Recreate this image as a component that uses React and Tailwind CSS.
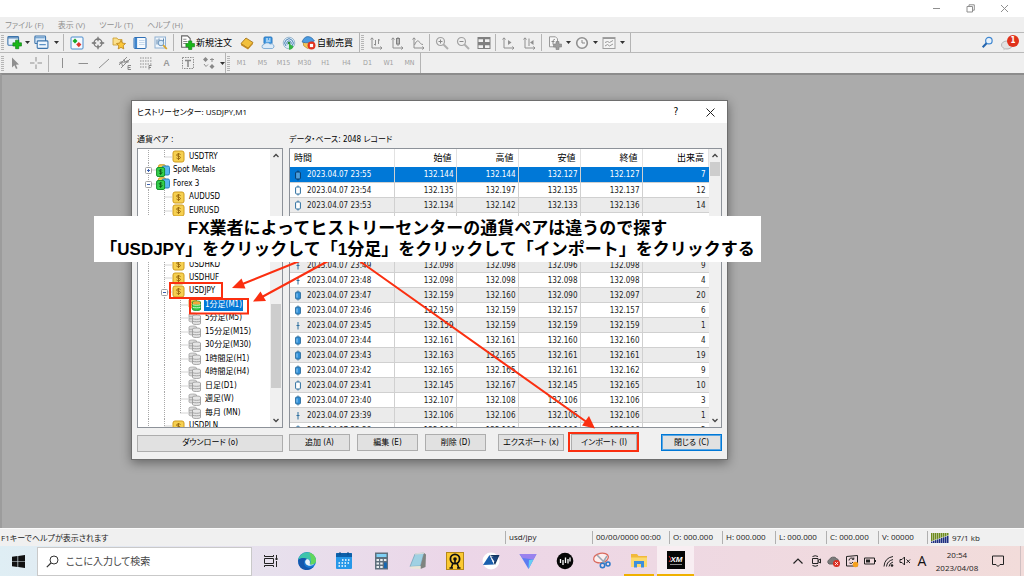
import React from "react";

const UI = "font-['DejaVu_Sans_Condensed','Noto_Sans_CJK_JP',sans-serif]";
const SEGOE = "font-['Open_Sans','Noto_Sans_CJK_JP',sans-serif]";

function Ico({ label, children, w = "w-[21px]", size = 14 }) {
  return (
    <button type="button" aria-label={label} className={`${w} h-full shrink-0 flex items-center justify-center`}>
      <svg width={size} height={size} viewBox="0 0 14 14" fill="none" aria-hidden="true">
        {children}
      </svg>
    </button>
  );
}

function Caret({ label }) {
  return (
    <button type="button" aria-label={label} className="w-1.5 h-full shrink-0 flex items-center justify-center">
      <svg width="5" height="3" viewBox="0 0 5 3" aria-hidden="true">
        <path d="M0 0h5L2.5 3z" fill="#333" />
      </svg>
    </button>
  );
}

const Sep = ({ m = "mx-px" }) => <span className={`${m} w-px h-[17px] shrink-0 bg-[#b4b4b4]`} />;

const Grip = () => (
  <span className="w-[3px] h-[15px] shrink-0 mx-px bg-[repeating-linear-gradient(#b5b5b5_0_1px,#efefef_1px_2px)]" />
);

const Plus = ({ x, y, c = "#18b818", s = "#0b7d12" }) => (
  <path
    d={`M${x + 2.5} ${y}h3v2.5h2.5v3h-2.5v2.5h-3v-2.5h-2.5v-3h2.5z`}
    fill={c}
    stroke={s}
    strokeWidth=".6"
  />
);

const G = "#8f8f8f";

function Axes() {
  return <path d="M3 2v10h10M1.5 3.5 3 1.8l1.5 1.7M11.3 10.5 13 12l-1.7 1.5" stroke={G} />;
}

function MainToolbar() {
  return (
    <div className="h-5 flex items-center border-b border-[#b9b9b9]">
      <div className="h-full flex items-center border-r border-[#b4b4b4]">
        <Grip />
        <Ico label="新規チャート" w="w-[19px]" size={15}>
          <rect x=".8" y="1.5" width="10" height="8" rx=".8" fill="#e6f1fb" stroke="#3c74ac" />
          <path d="M1 2.7h9.5" stroke="#3c74ac" />
          <Plus x={5.5} y={4.8} />
        </Ico>
        <Caret label="新規チャート一覧" />
        <Ico label="プロファイル" w="w-[23px]" size={15}>
          <rect x=".8" y="1" width="10" height="7" rx=".8" fill="#d7e8f8" stroke="#3c74ac" />
          <rect x="3" y="5.5" width="10" height="7" rx=".8" fill="#eef6fd" stroke="#3c74ac" />
          <path d="M5 9h6M1 2.5h9" stroke="#5c92c6" />
        </Ico>
        <Caret label="プロファイル一覧" />
        <Sep m="ml-1 mr-[2px]" />
        <Ico label="気配値表示">
          <rect x="1" y="1" width="12" height="12" rx="1" fill="#f4f9fe" stroke="#4a8ccc" />
          <path d="M5 2.5l2.5 2.5L5 7.5 2.5 5z" fill="#16a826" />
          <path d="M8.8 6l2.6 2.6-2.6 2.6-2.6-2.6z" fill="#e0342a" />
        </Ico>
        <Ico label="データウィンドウ">
          <circle cx="7" cy="7" r="4" stroke="#777" strokeWidth="1.3" />
          <path d="M7 .8v4.4M7 8.8v4.4M.8 7h4.4M8.8 7h4.4" stroke="#777" strokeWidth="1.3" />
        </Ico>
        <Ico label="ナビゲーター">
          <path d="M1 2h4l1 1.5h4V9H1z" fill="#fbe08c" stroke="#c99a2c" strokeWidth=".8" />
          <path d="M9 4.2l1.4 2.9 3.1.4-2.3 2.2.6 3.2L9 11.4l-2.8 1.5.6-3.2-2.3-2.2 3.1-.4z" fill="#fcc83a" stroke="#b7811c" strokeWidth=".8" />
        </Ico>
        <Ico label="ターミナル">
          <rect x="1" y="1.5" width="12" height="11" rx="1" fill="#f6fafe" stroke="#2f6fb5" />
          <path d="M1.5 2h2.6v10H1.5z" fill="#3f85cc" />
          <path d="M6 4.5h5.5M6 6.5h5.5M6 8.5h5.5" stroke="#b9cfe6" strokeWidth=".8" />
        </Ico>
        <Ico label="ストラテジーテスター">
          <rect x="1" y="1" width="10.5" height="11" fill="#f0f6fc" stroke="#8eb0d2" />
          <path d="M3 3.5v5M5 2.5v4M9.5 2.5v3" stroke="#5c85ad" />
          <circle cx="7" cy="7" r="2.8" fill="#d6eafa" stroke="#6d95bd" />
          <path d="M9.2 9.2l3.6 3.8" stroke="#dba52a" strokeWidth="1.8" />
        </Ico>
        <Sep m="mx-[2px]" />
        <button type="button" className="h-full flex items-center text-[9px] leading-3 text-black">
          <svg width="15" height="15" viewBox="0 0 14 14" className="ml-1 mr-px" fill="none" aria-hidden="true">
            <path d="M1.5.8h5.5l2.5 2.5v8.2h-8z" fill="#fff" stroke="#666" />
            <path d="M3 4h3M3 6h4M3 8h3" stroke="#888" />
            <Plus x={5.5} y={5.5} />
          </svg>
          新規注文
        </button>
        <span className="w-1" />
        <Ico label="メタエディター">
          <path d="M1 7.5L6 2l7 4.5-5 5.7z" fill="#f2c03c" stroke="#9a6a12" strokeWidth=".8" />
          <path d="M1 7.5v1.800L8 13.400l5-5.500V6.500l-5 5.600z" fill="#c58a1e" />
        </Ico>
        <Ico label="VPS">
          <rect x="3" y="1" width="8" height="7" rx="1" fill="#3f9be6" stroke="#2b77bd" />
          <path d="M5 3h2M8 3h1.5M5 5h4.5" stroke="#fff" />
          <path d="M3 12.5a2 2 0 010-4 3.5 3 0 016-.5 2.5 2.3 0 012.5 4.500z" fill="#dcebf8" stroke="#6c9fce" strokeWidth=".8" />
        </Ico>
        <Ico label="シグナル">
          <circle cx="7" cy="7" r="5.8" fill="#dceaf5" stroke="#9cb8cf" />
          <path d="M4 10a4.2 4.2 0 116 0M5.3 8.5a2.2 2.2 0 113.4 0" stroke="#4d86b8" />
          <circle cx="7" cy="7" r="1.3" fill="#2e8f3a" />
          <path d="M7 7.5v6.300c2.500 0 4-1.500 4.500-3.300z" fill="#35b443" />
        </Ico>
        <button type="button" className="h-full flex items-center text-[9px] leading-3 text-black">
          <svg width="15" height="15" viewBox="0 0 14 14" className="ml-0.5 mr-px" fill="none" aria-hidden="true">
            <path d="M2 6h9l-1 5-4 1.5L2.5 10z" fill="#f4c65b" stroke="#b98b23" strokeWidth=".7" />
            <path d="M1 6.5C2 4 3.5 1.5 6.5 1.5S11.5 4 12.5 5.5C9 7.5 5 7.8 1 6.5z" fill="#4c9be0" stroke="#2f6ca8" strokeWidth=".7" />
            <circle cx="9.8" cy="9.8" r="3.7" fill="#e2331f" />
            <rect x="8.3" y="8.3" width="3" height="3" fill="#fff" />
          </svg>
          自動売買
        </button>
        <span className="w-1.5" />
      </div>
      <div className="h-full flex items-center border-r border-[#b4b4b4]">
        <Grip />
        <Ico label="バーチャート">
          <Axes />
          <path d="M6.5 4v5.5M5 8.500h1.500M9.500 3v5M9.500 4H11" stroke={G} />
        </Ico>
        <Ico label="ローソク足">
          <Axes />
          <path d="M8 1v9" stroke={G} />
          <rect x="6.5" y="2.5" width="3" height="5.5" fill="#bbb" stroke="#808080" />
        </Ico>
        <Ico label="ラインチャート">
          <Axes />
          <path d="M3.5 9C5 5 7 4 8 5.5s2 3 4 3" stroke={G} />
        </Ico>
        <Sep />
        <Ico label="ズームイン">
          <circle cx="5.5" cy="5.5" r="4" stroke="#a2a2a2" strokeWidth="1.2" />
          <path d="M8.5 8.5l4.500 4.500" stroke="#b0b0b0" strokeWidth="2" />
          <path d="M3.5 5.5h4M5.5 3.5v4" stroke="#8a8a8a" />
        </Ico>
        <Ico label="ズームアウト">
          <circle cx="5.5" cy="5.5" r="4" stroke="#a2a2a2" strokeWidth="1.2" />
          <path d="M8.5 8.5l4.500 4.500" stroke="#b0b0b0" strokeWidth="2" />
          <path d="M3.5 5.5h4" stroke="#8a8a8a" />
        </Ico>
        <Ico label="チャートの整列">
          <g fill="#f2f2f2" stroke="#808080">
            <rect x="1" y="1.5" width="5.5" height="5" />
            <rect x="7.5" y="1.5" width="5.5" height="5" />
            <rect x="1" y="7.5" width="5.5" height="5" />
            <rect x="7.5" y="7.5" width="5.5" height="5" />
          </g>
          <path d="M1 2.5h12M1 8.5h12" stroke="#808080" strokeWidth="1.5" />
        </Ico>
        <Sep />
        <Ico label="自動スクロール">
          <Axes />
          <path d="M7 4v5l3.5-2.5z" fill={G} />
        </Ico>
        <Ico label="チャートシフト">
          <Axes />
          <path d="M7 2.5V10" stroke={G} />
          <path d="M11.5 4v5L8 6.500z" fill={G} />
        </Ico>
        <Sep m="mx-[2px]" />
        <Ico label="インディケーター">
          <path d="M1.5.8h6l2 2v8h-8z" fill="#f6f6f6" stroke="#999" />
          <path d="M5 8.5c0-6 1-5 2-5M3.500 5.500h3" stroke="#888" />
          <Plus x={5.5} y={5.5} c="#9d9d9d" s="#808080" />
        </Ico>
        <Caret label="インディケーター一覧" />
        <Ico label="時間足">
          <circle cx="7" cy="7" r="5.3" fill="#f4f4f4" stroke="#909090" strokeWidth="1.6" />
          <path d="M7 4v3h3" stroke="#888" />
        </Ico>
        <Caret label="時間足一覧" />
        <Ico label="定型チャート">
          <rect x="1" y="1.5" width="12" height="11" fill="#f4f4f4" stroke="#a0a0a0" />
          <path d="M1 2.500h12M3 6.500l2.500-1 2 1 3.500-2M3 10l2.500-1.500 2 1.500L11 8" stroke="#999" />
        </Ico>
        <Caret label="定型チャート一覧" />
        <span className="w-[5px]" />
      </div>
      <div className="ml-auto h-full flex items-center pr-1">
        <Ico label="検索" size={13}>
          <circle cx="8.5" cy="5" r="3.5" fill="#e9f3fc" stroke="#3f86d0" strokeWidth="1.3" />
          <path d="M6 7.8L1.800 12.200" stroke="#2565ae" strokeWidth="2.2" />
        </Ico>
        <button type="button" aria-label="お知らせ 1件" className="relative w-[22px] h-full flex items-center">
          <svg width="13" height="12" viewBox="0 0 13 12" className="mt-1 ml-[3px]" aria-hidden="true">
            <ellipse cx="6" cy="6" rx="5.5" ry="4" fill="#e2e2e2" stroke="#b5b5b5" />
            <path d="M2.5 9l0 2.500 3-2z" fill="#ccc" />
          </svg>
          <span className="absolute right-px top-[2px] size-3 rounded-full bg-[#e0311b] text-white text-[8px] leading-3 font-bold text-center">
            1
          </span>
        </button>
      </div>
    </div>
  );
}

const PERIODS = ["M1", "M5", "M15", "M30", "H1", "H4", "D1", "W1", "MN"];

function LineToolbar() {
  return (
    <div className="h-5 flex items-center">
      <div className="h-full flex items-center border-r border-[#b4b4b4]">
        <Grip />
        <Ico label="カーソル" w="w-5">
          <path d="M4 1.500v10l2.400-2.200 1.600 3.700 1.500-.7-1.600-3.500 3.100-.2z" fill="#8f8f8f" />
        </Ico>
        <Ico label="十字カーソル">
          <path d="M7 1v4.500M7 8.500V13M1 7h4.500M8.500 7H13" stroke={G} />
        </Ico>
        <Sep m="mx-[2px]" />
        <Ico label="垂直線">
          <path d="M7.5 2v10" stroke={G} />
        </Ico>
        <Ico label="水平線">
          <path d="M2.5 7.500h9.500" stroke={G} />
        </Ico>
        <Ico label="トレンドライン">
          <path d="M2 12L12 3" stroke={G} />
        </Ico>
        <Ico label="等間隔チャネル">
          <path d="M1 9L9 1M3 12l9-9M3 5l1.500 5M6 3l1.500 5M9 4l1 3M1 7l10-2" stroke={G} />
          <path d="M13 9.500h-3v4h3M10 11.500h2.500" stroke="#888" />
        </Ico>
        <Ico label="フィボナッチ">
          <path d="M1 2h12M1 5h12M1 8h12M1 11h7" stroke={G} strokeDasharray="1.5 1" />
          <path d="M12.500 9.500h-2.500v4M10 11.500h2" stroke="#888" />
        </Ico>
        <button type="button" className="w-[21px] h-full text-[9px] leading-none font-bold text-[#999] font-['Liberation_Sans',sans-serif]">A</button>
        <Ico label="テキストラベル">
          <rect x="1.5" y="1.5" width="11" height="11" stroke={G} strokeDasharray="1.5 1" />
          <path d="M4 4.500h6M7 4.500V11" stroke="#888" strokeWidth="1.5" />
        </Ico>
        <Ico label="矢印">
          <path d="M3.500 1l2.500 2.500L3.500 6 1 3.500zM10 8l2.500 2.500L10 13l-2.500-2.500z" fill="#888" />
          <path d="M2 8l2 2.500 2-2M8 3.500h4M10 2v4" stroke={G} />
        </Ico>
        <Caret label="矢印一覧" />
      </div>
      <div className="h-full flex items-center border-r border-[#b4b4b4] text-[7px] text-[#a0a0a0]">
        <Grip />
        {PERIODS.map((p) => (
          <button type="button" key={p} className="w-[21px] h-full text-center">
            {p}
          </button>
        ))}
      </div>
    </div>
  );
}

/* ---------- symbol tree ---------- */

function Guide({ kind }) {
  const paths = {
    pipe: "M8.5 0V14",
    tee: "M8.5 0V14M8.5 7H16",
    end: "M8.5 0V7M8.5 7H16",
    plus: "M8.5 0V14M8.5 7H16",
    minus: "M8.5 0V14M8.5 7H16",
  };
  const box = kind === "plus" || kind === "minus";
  return (
    <svg width="16" height="14" viewBox="0 0 16 14" className="shrink-0" fill="none" aria-hidden="true">
      <path d={paths[kind]} stroke="#a8a8a8" strokeDasharray="1 1" />
      {box && <rect x="5.5" y="4.5" width="6" height="6" rx="1" fill="#fff" stroke="#a0a0a0" />}
      {box && <path d={kind === "plus" ? "M7 7.5h3M8.5 6v3" : "M7 7.5h3"} stroke="#3a5fae" />}
    </svg>
  );
}

function NodeIcon({ type }) {
  const on = type === "dbOn";
  return (
    <svg width="14" height="13" viewBox="0 0 14 13" className="shrink-0" fill="none" aria-hidden="true">
      {type === "coin" && (
        <>
          <rect x="1" y="1" width="11" height="11" rx="2" fill="#f6d050" stroke="#cf9c1f" />
          <path d="M8.5 4.500c-1-1-4-.8-4 .6 0 1.600 4 .7 4 2.400 0 1.400-3 1.600-4 .5M6.500 3v7" stroke="#9c6c10" />
        </>
      )}
      {type === "group" && (
        <>
          <rect x="2.5" y=".8" width="7" height="8" rx="1.5" fill="#f7d35a" stroke="#c9971f" />
          <rect x="6" y="2" width="7.5" height="9" rx="1.5" fill="#59b6ee" stroke="#2b81bd" />
          <rect x=".6" y="3.5" width="8" height="9" rx="1.5" fill="#35cf4c" stroke="#13912a" />
          <path d="M6.2 6.300c-.8-.8-3-.6-3 .5 0 1.200 3 .6 3 1.900 0 1.100-2.300 1.200-3.100.4M4.600 5.200v5.800" stroke="#064f12" strokeWidth=".8" />
        </>
      )}
      {(type === "db" || on) && (
        <>
          <path d="M1 2c0-1.300 7.500-1.300 7.500 0v7c0 1.300-7.500 1.300-7.500 0z" fill={on ? "#f5c443" : "#dcdcdc"} stroke={on ? "#c58c1b" : "#a2a2a2"} strokeWidth=".8" />
          <path d="M1 4.300h4M1 6.800h4" stroke={on ? "#c58c1b" : "#a2a2a2"} strokeWidth=".8" />
          <path d="M4.500 4c0-1.300 8-1.300 8 0v7.500c0 1.300-8 1.300-8 0z" fill={on ? "#31c944" : "#e6e6e6"} stroke={on ? "#12872a" : "#939393"} strokeWidth=".8" />
          {on && <path d="M4.800 4c0-1.100 7.400-1.100 7.400 0v2.600H4.800z" fill="#f5a83a" />}
          <path d="M4.500 6.700c2 .8 6 .8 8 0M4.500 9.200c2 .8 6 .8 8 0" stroke={on ? "#e9ffe9" : "#939393"} strokeWidth=".8" />
        </>
      )}
    </svg>
  );
}

const TREE = [
  { g: ["pipe", "end"], i: "coin", t: "USDTRY" },
  { g: ["plus"], i: "group", t: "Spot Metals" },
  { g: ["minus"], i: "group", t: "Forex 3" },
  { g: ["pipe", "tee"], i: "coin", t: "AUDUSD" },
  { g: ["pipe", "tee"], i: "coin", t: "EURUSD" },
  { g: ["pipe", "tee"], i: "coin", t: "GBPUSD" },
  { g: ["pipe", "tee"], i: "coin", t: "USDCAD" },
  { g: ["pipe", "tee"], i: "coin", t: "USDCHF" },
  { g: ["pipe", "tee"], i: "coin", t: "USDHKD" },
  { g: ["pipe", "tee"], i: "coin", t: "USDHUF" },
  { g: ["pipe", "minus"], i: "coin", t: "USDJPY" },
  { g: ["pipe", "pipe", "tee"], i: "dbOn", t: "1分足(M1)", on: true },
  { g: ["pipe", "pipe", "tee"], i: "db", t: "5分足(M5)" },
  { g: ["pipe", "pipe", "tee"], i: "db", t: "15分足(M15)" },
  { g: ["pipe", "pipe", "tee"], i: "db", t: "30分足(M30)" },
  { g: ["pipe", "pipe", "tee"], i: "db", t: "1時間足(H1)" },
  { g: ["pipe", "pipe", "tee"], i: "db", t: "4時間足(H4)" },
  { g: ["pipe", "pipe", "tee"], i: "db", t: "日足(D1)" },
  { g: ["pipe", "pipe", "tee"], i: "db", t: "週足(W)" },
  { g: ["pipe", "pipe", "end"], i: "db", t: "毎月 (MN)" },
  { g: ["pipe", "tee"], i: "coin", t: "USDPLN" },
];

function ScrollBar({ thumb }) {
  return (
    <div className="w-3 shrink-0 bg-[#f0f0f0] flex flex-col items-center" aria-hidden="true">
      <svg width="12" height="13" viewBox="0 0 12 13" fill="none">
        <path d="M3.5 8L6 5.500 8.500 8" stroke="#444" strokeWidth="1.3" />
      </svg>
      <div className="flex-1 w-full px-px">
        <div className={`bg-[#cdcdcd] ${thumb}`} />
      </div>
      <svg width="12" height="13" viewBox="0 0 12 13" fill="none">
        <path d="M3.5 5L6 7.500 8.500 5" stroke="#444" strokeWidth="1.3" />
      </svg>
    </div>
  );
}

function SymbolTree() {
  return (
    <div className="h-[280px] flex overflow-hidden bg-white border border-[#8d9299]">
      <ul role="tree" aria-label="通貨ペア" className="flex-1 h-[284px] pt-px pl-[2px] grid auto-rows-fr text-[8px] leading-3 text-black">
        {TREE.map((n) => (
          <li key={n.t} role="treeitem" aria-selected={!!n.on} className="min-h-0 flex items-center whitespace-nowrap">
            {n.g.map((k, i) => (
              <Guide key={i} kind={k} />
            ))}
            <NodeIcon type={n.i} />
            <span className={n.on ? "ml-[2px] px-px bg-[#0078d7] text-white" : "ml-[3px]"}>{n.t}</span>
          </li>
        ))}
      </ul>
      <ScrollBar thumb="mt-[142px] h-[84px]" />
    </div>
  );
}

/* ---------- price table ---------- */

const ROWS = [
  ["23:55", "132.144", "132.144", "132.127", "132.127", "7", "sel"],
  ["23:54", "132.135", "132.197", "132.135", "132.137", "12", "up"],
  ["23:53", "132.134", "132.142", "132.133", "132.136", "14", "up"],
  ["23:52", "132.134", "132.134", "132.134", "132.134", "2", "tick"],
  ["23:51", "132.120", "132.135", "132.120", "132.134", "8", "up"],
  ["23:50", "132.098", "132.121", "132.098", "132.120", "11", "up"],
  ["23:49", "132.098", "132.098", "132.096", "132.098", "9", "tick"],
  ["23:48", "132.098", "132.098", "132.098", "132.098", "4", "tick"],
  ["23:47", "132.159", "132.160", "132.090", "132.097", "20", "down"],
  ["23:46", "132.159", "132.159", "132.157", "132.157", "6", "down"],
  ["23:45", "132.159", "132.159", "132.159", "132.159", "1", "tick"],
  ["23:44", "132.161", "132.161", "132.160", "132.160", "4", "down"],
  ["23:43", "132.163", "132.165", "132.161", "132.161", "19", "down"],
  ["23:42", "132.165", "132.165", "132.161", "132.162", "9", "down"],
  ["23:41", "132.145", "132.167", "132.145", "132.165", "10", "up"],
  ["23:40", "132.107", "132.108", "132.106", "132.106", "3", "down"],
  ["23:39", "132.106", "132.106", "132.106", "132.106", "1", "tick"],
  ["23:38", "132.106", "132.106", "132.106", "132.106", "2", "down"],
];

function Candle({ type }) {
  const c = type === "sel" ? "#063b6b" : "#2d6f9f";
  if (type === "tick") {
    return (
      <svg width="8" height="11" viewBox="0 0 8 11" className="shrink-0" fill="none" aria-hidden="true">
        <path d="M4 2v7.500M2.500 5.500h3" stroke={c} />
      </svg>
    );
  }
  return (
    <svg width="8" height="11" viewBox="0 0 8 11" className="shrink-0" fill="none" aria-hidden="true">
      <path d="M4 .5v10" stroke={c} />
      <rect x="1.6" y="2" width="4.8" height="7" rx="1" fill={type === "down" ? "#2f8fd8" : type === "sel" ? "#4f9fdd" : "#fff"} stroke={c} />
      {type === "down" && <path d="M3 3.500v4" stroke="#9bd0f5" />}
    </svg>
  );
}

const HEAD = ["始値", "高値", "安値", "終値", "出来高"];

function PriceTable() {
  return (
    <div className="h-[280px] flex overflow-hidden bg-white border border-[#8d9299]">
      <div className="flex-1 overflow-hidden">
        <table className="w-full table-fixed border-collapse text-[8px] leading-3 text-[#222]">
          <colgroup>
            <col className="w-[104px]" />
            <col className="w-[62px]" />
            <col className="w-[62px]" />
            <col className="w-[62px]" />
            <col className="w-[62px]" />
            <col />
          </colgroup>
          <thead>
            <tr className="h-[18px] text-[9px] text-black">
              <th className="p-0 pl-1 text-left font-normal border-r border-[#e2e2e2]">時間</th>
              {HEAD.map((h) => (
                <th key={h} className="p-0 pr-1 text-right font-normal border-r border-[#e2e2e2]">
                  {h}
                </th>
              ))}
            </tr>
          </thead>
          <tbody>
            {ROWS.map((r, i) => (
              <tr
                key={r[0]}
                className={`h-[15px] ${i === 0 ? "bg-[#0078d7] text-white" : i % 2 ? "bg-white" : "bg-[#ebebeb]"}`}
              >
                <td className="p-0 pt-[2px] border-r border-b border-[#d0d0d0]">
                  <span className="flex items-center pl-1 gap-[5px]">
                    <Candle type={r[6]} />
                    2023.04.07 {r[0]}
                  </span>
                </td>
                {r.slice(1, 6).map((v, j) => (
                  <td key={j} className={`p-0 pt-[2px] text-right border-b border-[#d0d0d0] ${j < 4 ? "pr-[2px] border-r" : "pr-[3px]"}`}>
                    {v}
                  </td>
                ))}
              </tr>
            ))}
          </tbody>
        </table>
      </div>
      <ScrollBar thumb="h-3.5" />
    </div>
  );
}

function DlgButton({ className, primary, children }) {
  return (
    <button
      type="button"
      className={`h-[17px] border text-[8px] leading-none text-black bg-[#e1e1e1] whitespace-nowrap ${
        primary ? "border-[#0078d7] ring-1 ring-inset ring-[#5aa6e2]" : "border-[#adadad]"
      } ${className}`}
    >
      {children}
    </button>
  );
}

function HistoryDialog() {
  return (
    <section
      role="dialog"
      aria-label="ヒストリーセンター: USDJPY,M1"
      className="absolute left-[131px] top-[27px] w-[597px] bg-[#f0f0f0] border border-[#6e6e6e] shadow-[0_3px_10px_rgba(0,0,0,0.4)]"
    >
      <header className="h-[22px] pl-[5px] bg-white flex items-center text-[8px] leading-3 text-black">
        <h1 className={`flex-1 [font-feature-settings:'palt'] ${SEGOE}`}>ヒストリーセンター: USDJPY,M1</h1>
        <button type="button" aria-label="ヘルプ" className="w-[34px] text-[10px]">?</button>
        <button type="button" aria-label="閉じる" className="w-[34px] h-full flex items-center justify-center">
          <svg width="9" height="9" viewBox="0 0 9 9" fill="none" aria-hidden="true">
            <path d="M.5.5l8 8M8.500.5l-8 8" stroke="#222" />
          </svg>
        </button>
      </header>
      <div className="flex gap-1.5 px-[5px] pb-[7px] [font-feature-settings:'palt']">
        <div className="w-[146px] shrink-0">
          <h2 className="h-[25px] pt-[11px] text-[8px] leading-3 text-black">通貨ペア :</h2>
          <SymbolTree />
          <DlgButton className="mt-1.5 w-full">ダウンロード (o)</DlgButton>
        </div>
        <div className="flex-1 min-w-0">
          <h2 className="h-[25px] pt-[11px] text-[8px] leading-3 text-black">データ・ベース: 2048 レコード</h2>
          <PriceTable />
          <div className="mt-1.5 flex gap-[7px]">
            <DlgButton className="w-[61px]">追加 (A)</DlgButton>
            <DlgButton className="w-[61px]">編集 (E)</DlgButton>
            <DlgButton className="w-[61px]">削除 (D)</DlgButton>
            <DlgButton className="ml-[5px] w-[66px]">エクスポート (x)</DlgButton>
            <DlgButton className="w-[66px]">インポート (I)</DlgButton>
            <DlgButton className="ml-auto w-[61px]" primary>
              閉じる (C)
            </DlgButton>
          </div>
        </div>
      </div>
    </section>
  );
}

function Annotations() {
  return (
    <div className="absolute left-[94px] top-[143px]">
      <svg width="667" height="240" viewBox="94 216 667 240" fill="none" className="absolute left-0 top-0 pointer-events-none" aria-hidden="true">
        <g stroke="#fb2f10" strokeWidth="2">
          <path d="M302 260L240 285M330 260L262 297M358 260L588 423" />
          <rect x="170" y="283" width="52" height="15" />
          <rect x="190" y="299" width="58" height="14.5" />
          <rect x="569" y="433" width="69" height="18" />
        </g>
        <g fill="#fb2f10">
          <path d="M232 288l9.500-9.500 4 10z" />
          <path d="M253 301.500l7.500-10 5.500 9.500z" />
          <path d="M595 428.500l-13-3 7-9.500z" />
        </g>
      </svg>
      <p className="relative w-[667px] h-[46px] pt-[2px] bg-white text-center text-[17px] leading-[21px] font-bold text-black whitespace-nowrap font-['Liberation_Sans','Noto_Sans_CJK_JP',sans-serif]">
        FX業者によってヒストリーセンターの通貨ペアは違うので探す
        <br />
        「USDJPY」をクリックして「1分足」をクリックして「インポート」をクリックする
      </p>
    </div>
  );
}

/* ---------- status bar ---------- */

const CELLS = [
  ["usd/jpy", "w-[87px]"],
  ["00/00/0000 00:00", "w-[77px]"],
  ["O: 000.000", "w-[53px]"],
  ["H: 000.000", "w-[53px]"],
  ["L: 000.000", "w-[51px]"],
  ["C: 000.000", "w-[52px]"],
  ["V: 00000", "w-[49px]"],
];

function StatusBar() {
  return (
    <footer className={`h-[18px] flex items-center bg-[#f0f0f0] border-t border-[#fafafa] text-[8px] leading-3 text-[#222] ${SEGOE}`}>
      <span className="flex-1 pl-px [font-feature-settings:'palt']">F1キーでヘルプが表示されます</span>
      {CELLS.map(([t, w]) => (
        <span key={t} className={`${w} h-[13px] pl-[3px] border-l border-[#b0b0b0] whitespace-nowrap`}>
          {t}
        </span>
      ))}
      <span className="w-[97px] h-[13px] pl-[3px] flex items-center gap-[3px] border-l border-[#b0b0b0]">
        <svg width="18" height="10" viewBox="0 0 18 10" aria-hidden="true">
          {[0, 2, 4, 6, 8, 10, 12, 14, 16].map((x, i) => (
            <g key={x}>
              <rect x={x} y="0" width="1.5" height={8 - i * 0.7} fill="#6d8b1c" />
              <rect x={x} y={8.5 - i * 0.7} width="1.5" height={1.5 + i * 0.7} fill="#1c2d80" />
            </g>
          ))}
        </svg>
        97/1 kb
      </span>
    </footer>
  );
}

/* ---------- taskbar ---------- */

function TaskApp({ label, children, active, running }) {
  return (
    <button type="button" aria-label={label} className={`flex-1 h-full flex flex-col items-center ${active ? "bg-[#f8eef2]" : ""}`}>
      <span className="flex-1 flex items-center">
        <svg width="20" height="20" viewBox="0 0 20 20" fill="none" aria-hidden="true">
          {children}
        </svg>
      </span>
      {(running || active) && <span className={`h-[2px] bg-[#efb000] ${active ? "w-full" : "w-[30px]"}`} />}
    </button>
  );
}

function Tray({ label, w = "w-[18px]", children }) {
  return (
    <button type="button" aria-label={label} className={`${w} h-full flex items-center justify-center`}>
      <svg width="14" height="14" viewBox="0 0 14 14" fill="none" stroke="#222" aria-hidden="true">
        {children}
      </svg>
    </button>
  );
}

function Taskbar() {
  return (
    <nav className={`h-[30px] flex items-center bg-linear-to-r from-[#dfeef4] via-[#ecd6e8] via-45% to-[#f2dcda] ${SEGOE}`}>
      <button type="button" aria-label="スタート" className="w-[37px] h-full flex items-center justify-center">
        <svg width="13" height="13" viewBox="0 0 13 13" aria-hidden="true">
          <path d="M0 1.800L5.500 1v5.200H0zM6.200.9L13 0v6.200H6.200zM0 6.800h5.500V12L0 11.200zM6.200 6.800H13V13l-6.800-.9z" fill="#111" />
        </svg>
      </button>
      <label className="w-[215px] h-[29px] pl-2 flex items-center gap-[7px] bg-white border border-[#c9c9c9]">
        <svg width="13" height="13" viewBox="0 0 13 13" fill="none" aria-hidden="true">
          <circle cx="8" cy="5" r="4" stroke="#333" />
          <path d="M5 8L.8 12.200" stroke="#333" strokeWidth="1.2" />
        </svg>
        <input
          aria-label="検索"
          placeholder="ここに入力して検索"
          className="min-w-0 flex-1 bg-transparent outline-none text-[10px] leading-4 placeholder:text-[#444] [font-feature-settings:'palt']"
        />
      </label>
      <div className="w-[442px] h-full flex">
        <TaskApp label="タスクビュー">
          <path d="M4.500 5.500V4M13.500 4v1.500M4.500 14.500V16M13.500 16v-1.500M4.500 7.500h9v5h-9zM4.500 5.500h9M4.500 14.500h9M16.500 4v3M16.500 10v6" stroke="#222" />
          <rect x="15.500" y="7" width="2" height="2" fill="#222" />
        </TaskApp>
        <TaskApp label="Edge">
          <circle cx="10" cy="10" r="9" fill="#1877d2" />
          <path d="M1.200 9A9 9 0 0119 9c.3 3.500-3 5-6 4.300 1.500-2 .5-5-3-5.300C6 7.600 2.500 8 1.200 9z" fill="#3ec5ab" />
          <path d="M12 1.400A9 9 0 0119 9c.3 3.500-3 5-6 4.300 1.700-2.500 1-8-1-11.900z" fill="#62d65c" />
          <path d="M1.200 9C3 6.800 8 6.500 10 8c-3 .5-4 4-2 6.800 2 2.600 6 3 9 .5C13 21 3.500 20 1.500 13z" fill="#1557ad" />
          <path d="M10 8c2.500.2 3.500 2.500 2.800 4.500-.7 1.300 2 1.700 4.200.8-2 2-6.500 2-8.200-.3C7.600 11.300 8 8.800 10 8z" fill="#eaf3fb" />
        </TaskApp>
        <TaskApp label="カレンダー">
          <rect x="2" y="2" width="16" height="16" rx="1" fill="#2798e8" />
          <path d="M2 3a1 1 0 011-1h14a1 1 0 011 1v3H2z" fill="#0d5fa8" />
          <path d="M6 1v3M14 1v3" stroke="#0b4a86" />
          <path d="M8 9h8M4.500 12h11.500M4.500 15h8.500" stroke="#fff" strokeWidth="1.4" strokeDasharray="1.5 1.5" />
        </TaskApp>
        <TaskApp label="電卓">
          <rect x="4" y="1.5" width="13" height="17" fill="#5f6f7d" />
          <rect x="5.5" y="3" width="10" height="3" fill="#7fd0f5" />
          <path d="M5.500 9h10M5.500 12.500h7M5.500 16h7" stroke="#e9edf0" strokeWidth="2.2" strokeDasharray="2.5 1.2" />
          <rect x="13" y="11.5" width="2.8" height="5.7" fill="#1467b4" />
        </TaskApp>
        <TaskApp label="メモ帳">
          <path d="M7 3l9-1-3.500 13-10.500.5z" fill="#9fd1e3" stroke="#6e9fb3" strokeWidth=".7" />
          <path d="M16 2l2 1.500L17.500 16l-5 2V15z" fill="#7f8480" />
          <path d="M2 15.500l10.500-.5v3L3 17.500z" fill="#e9e6d8" />
          <path d="M7 3l9-1" stroke="#d9d9d9" strokeWidth="1.5" />
        </TaskApp>
        <TaskApp label="監視ツール">
          <rect x="1.5" y="1.5" width="17" height="17" fill="#fbc933" stroke="#b6891a" />
          <circle cx="10" cy="8" r="4.6" stroke="#111" strokeWidth="1.8" />
          <circle cx="10" cy="8" r="1.8" fill="#111" />
          <path d="M10 9v3.500M8 12l-1.800 5M12 12l1.800 5M4.500 17h3.500M12 17h3.500" stroke="#111" strokeWidth="1.6" />
        </TaskApp>
        <TaskApp label="チャートアプリ">
          <circle cx="10" cy="10" r="8.5" fill="#fff" />
          <path d="M8.500 4l4.500 9.500L2 14z" fill="#1a5fae" />
          <path d="M8.500 4h10l-4.500 10z" fill="#12355f" />
          <path d="M8.500 4l4 8.500 2.500-5.500z" fill="#fff" />
          <path d="M10 5.500h7l-3 6z" fill="#1c4680" />
        </TaskApp>
        <TaskApp label="VPN">
          <path d="M1.500 3h17L10.500 18z" fill="#5b7df2" />
          <path d="M1.500 3h17l-3 5.500L4.500 7z" fill="#9a82ee" />
          <path d="M11 9l4.500-.5-5 9.500z" fill="#66cdf2" />
        </TaskApp>
        <TaskApp label="音声アプリ">
          <circle cx="10" cy="10" r="8.3" fill="#060606" />
          <path d="M5.500 8v4M8 9v5M10.500 6.500v5.500M13 8v4.500M15 6.500v4" stroke="#fff" strokeWidth="1.3" />
        </TaskApp>
        <TaskApp label="Snipping Tool">
          <ellipse cx="9" cy="7" rx="7.5" ry="4.8" fill="#fbeeee" stroke="#d96a5e" strokeWidth="1.3" transform="rotate(-12 9 7)" />
          <path d="M5 4l9 9M15 5l-4.500 7" stroke="#9aa7b5" strokeWidth="1.5" />
          <circle cx="10.5" cy="14.5" r="2.2" stroke="#2e79c9" strokeWidth="1.5" />
          <circle cx="16" cy="13" r="2" stroke="#2e79c9" strokeWidth="1.5" />
        </TaskApp>
        <TaskApp label="エクスプローラー" running>
          <path d="M2 4h6l1.500 2H18v11H2z" fill="#f1b93a" />
          <path d="M2 7.500h16V17H2z" fill="#fbd96c" />
          <path d="M5 17.500V11h10v6.500h-3V14H8v3.500z" fill="#3d8edb" />
        </TaskApp>
        <TaskApp label="XM" active>
          <rect x="1" y="1" width="18" height="18" fill="#060606" />
          <text x="10.5" y="12" textAnchor="middle" fontSize="8" fontWeight="bold" fontStyle="italic" fontFamily="Liberation Sans, sans-serif" fill="#fff">
            XM
          </text>
          <path d="M3 6l2 3-2 3" stroke="#e02a20" />
          <path d="M4 14.500h12" stroke="#8a8a8a" />
        </TaskApp>
      </div>
      <div className="ml-auto h-full flex items-center text-[#222]">
        <Tray label="隠れているインジケーター">
          <path d="M2.500 9.500L7 5l4.500 4.500" strokeWidth="1.2" />
        </Tray>
        <Tray label="会議">
          <path d="M3.500 4.500h5.500v5H3.500zM9 6.500l2.500-1.500v4L9 7.500M3.500 2.500q2.700-1.500 5.500 0M3.500 11.500q2.700 1.500 5.500 0" />
        </Tray>
        <Tray label="OneDrive">
          <path d="M2 10a2.500 2.500 0 01.5-4.500 4 3.500 0 017-1 3 3 0 012 3.500V10z" fill="#7b7b7b" stroke="#666" />
          <circle cx="9.5" cy="9.5" r="3.5" fill="#dc2e22" stroke="none" />
          <path d="M8.200 8.200l2.600 2.600M10.800 8.200l-2.600 2.600" stroke="#fff" />
        </Tray>
        <Tray label="更新">
          <path d="M1.500 2.500l11-1v10.500h-11z" />
          <path d="M8.500 5A2.500 2.500 0 004 6.500M4.500 9A2.500 2.500 0 008 8M8.800 3.500V5.300H7" />
          <circle cx="10.5" cy="10.5" r="2.8" fill="#f5a01e" stroke="none" />
        </Tray>
        <Tray label="バッテリー">
          <path d="M1.500 4h10v6h-10z" />
          <path d="M3 5.500h4v3H3zM12 6h1v2h-1z" fill="#222" stroke="none" />
        </Tray>
        <Tray label="ネットワーク">
          <path d="M3 12.500Q3.500 4 12 2.500M5.500 12.500Q6 7 12 5.500M8 12.500Q8.500 9 12 8" />
          <circle cx="11" cy="11.5" r="1.3" fill="#222" stroke="none" />
        </Tray>
        <Tray label="音量 ミュート" w="w-4">
          <path d="M2 5.500h2L6.500 3v8L4 8.500H2zM8.500 5.500l3.500 3.500M12 5.500L8.500 9" />
        </Tray>
        <button type="button" aria-label="入力モード" className="w-[18px] text-[14px] leading-none text-[#111]">A</button>
        <div className="w-[52px] text-center text-[8px] leading-[13px]">
          <div>20:54</div>
          <div>2023/04/08</div>
        </div>
        <Tray label="通知" w="w-[30px]">
          <path d="M1.500 2h11v8.500h-3.500L7 12.500l-2-2H1.500z" />
        </Tray>
        <span className="ml-[7px] mr-[3px] w-px h-full bg-[#cfc0c2]" />
      </div>
    </nav>
  );
}

export default function App() {
  return (
    <div className={`min-h-screen flex flex-col overflow-hidden bg-[#efefef] ${UI}`}>
      <header>
        <div className="h-[17px] flex justify-end items-center bg-white">
          {[
            ["最小化", "M2 5.500h7"],
            ["元に戻す", "M2 3.500h5.500V9H2zM4 3.500V1.800h5.300v5.400H7.500"],
            ["閉じる", "M2 2l7 7M9 2L2 9"],
          ].map(([l, d]) => (
            <button type="button" key={l} aria-label={l} className="w-[34px] h-full flex items-center justify-center">
              <svg width="11" height="11" viewBox="0 0 11 11" fill="none" aria-hidden="true">
                <path d={d} stroke="#8f8f8f" />
              </svg>
            </button>
          ))}
          <span className="w-[3px]" />
        </div>
        <nav className={`h-4 pl-[5px] flex items-center gap-[14px] border-b border-[#b9b9b9] text-[8px] leading-3 text-[#8f8f8f] [font-feature-settings:'palt'] ${SEGOE}`}>
          <button type="button">ファイル (F)</button>
          <button type="button">表示 (V)</button>
          <button type="button">ツール (T)</button>
          <button type="button">ヘルプ (H)</button>
        </nav>
        <MainToolbar />
        <LineToolbar />
      </header>
      <main className="relative flex-1 min-h-[455px] bg-[#ababab] border-t-2 border-l-2 border-t-[#8c8c8c] border-l-[#9c9c9c]">
        <div className="absolute -left-[2px] -top-[2px]">
          <HistoryDialog />
          <Annotations />
        </div>
      </main>
      <StatusBar />
      <Taskbar />
    </div>
  );
}
